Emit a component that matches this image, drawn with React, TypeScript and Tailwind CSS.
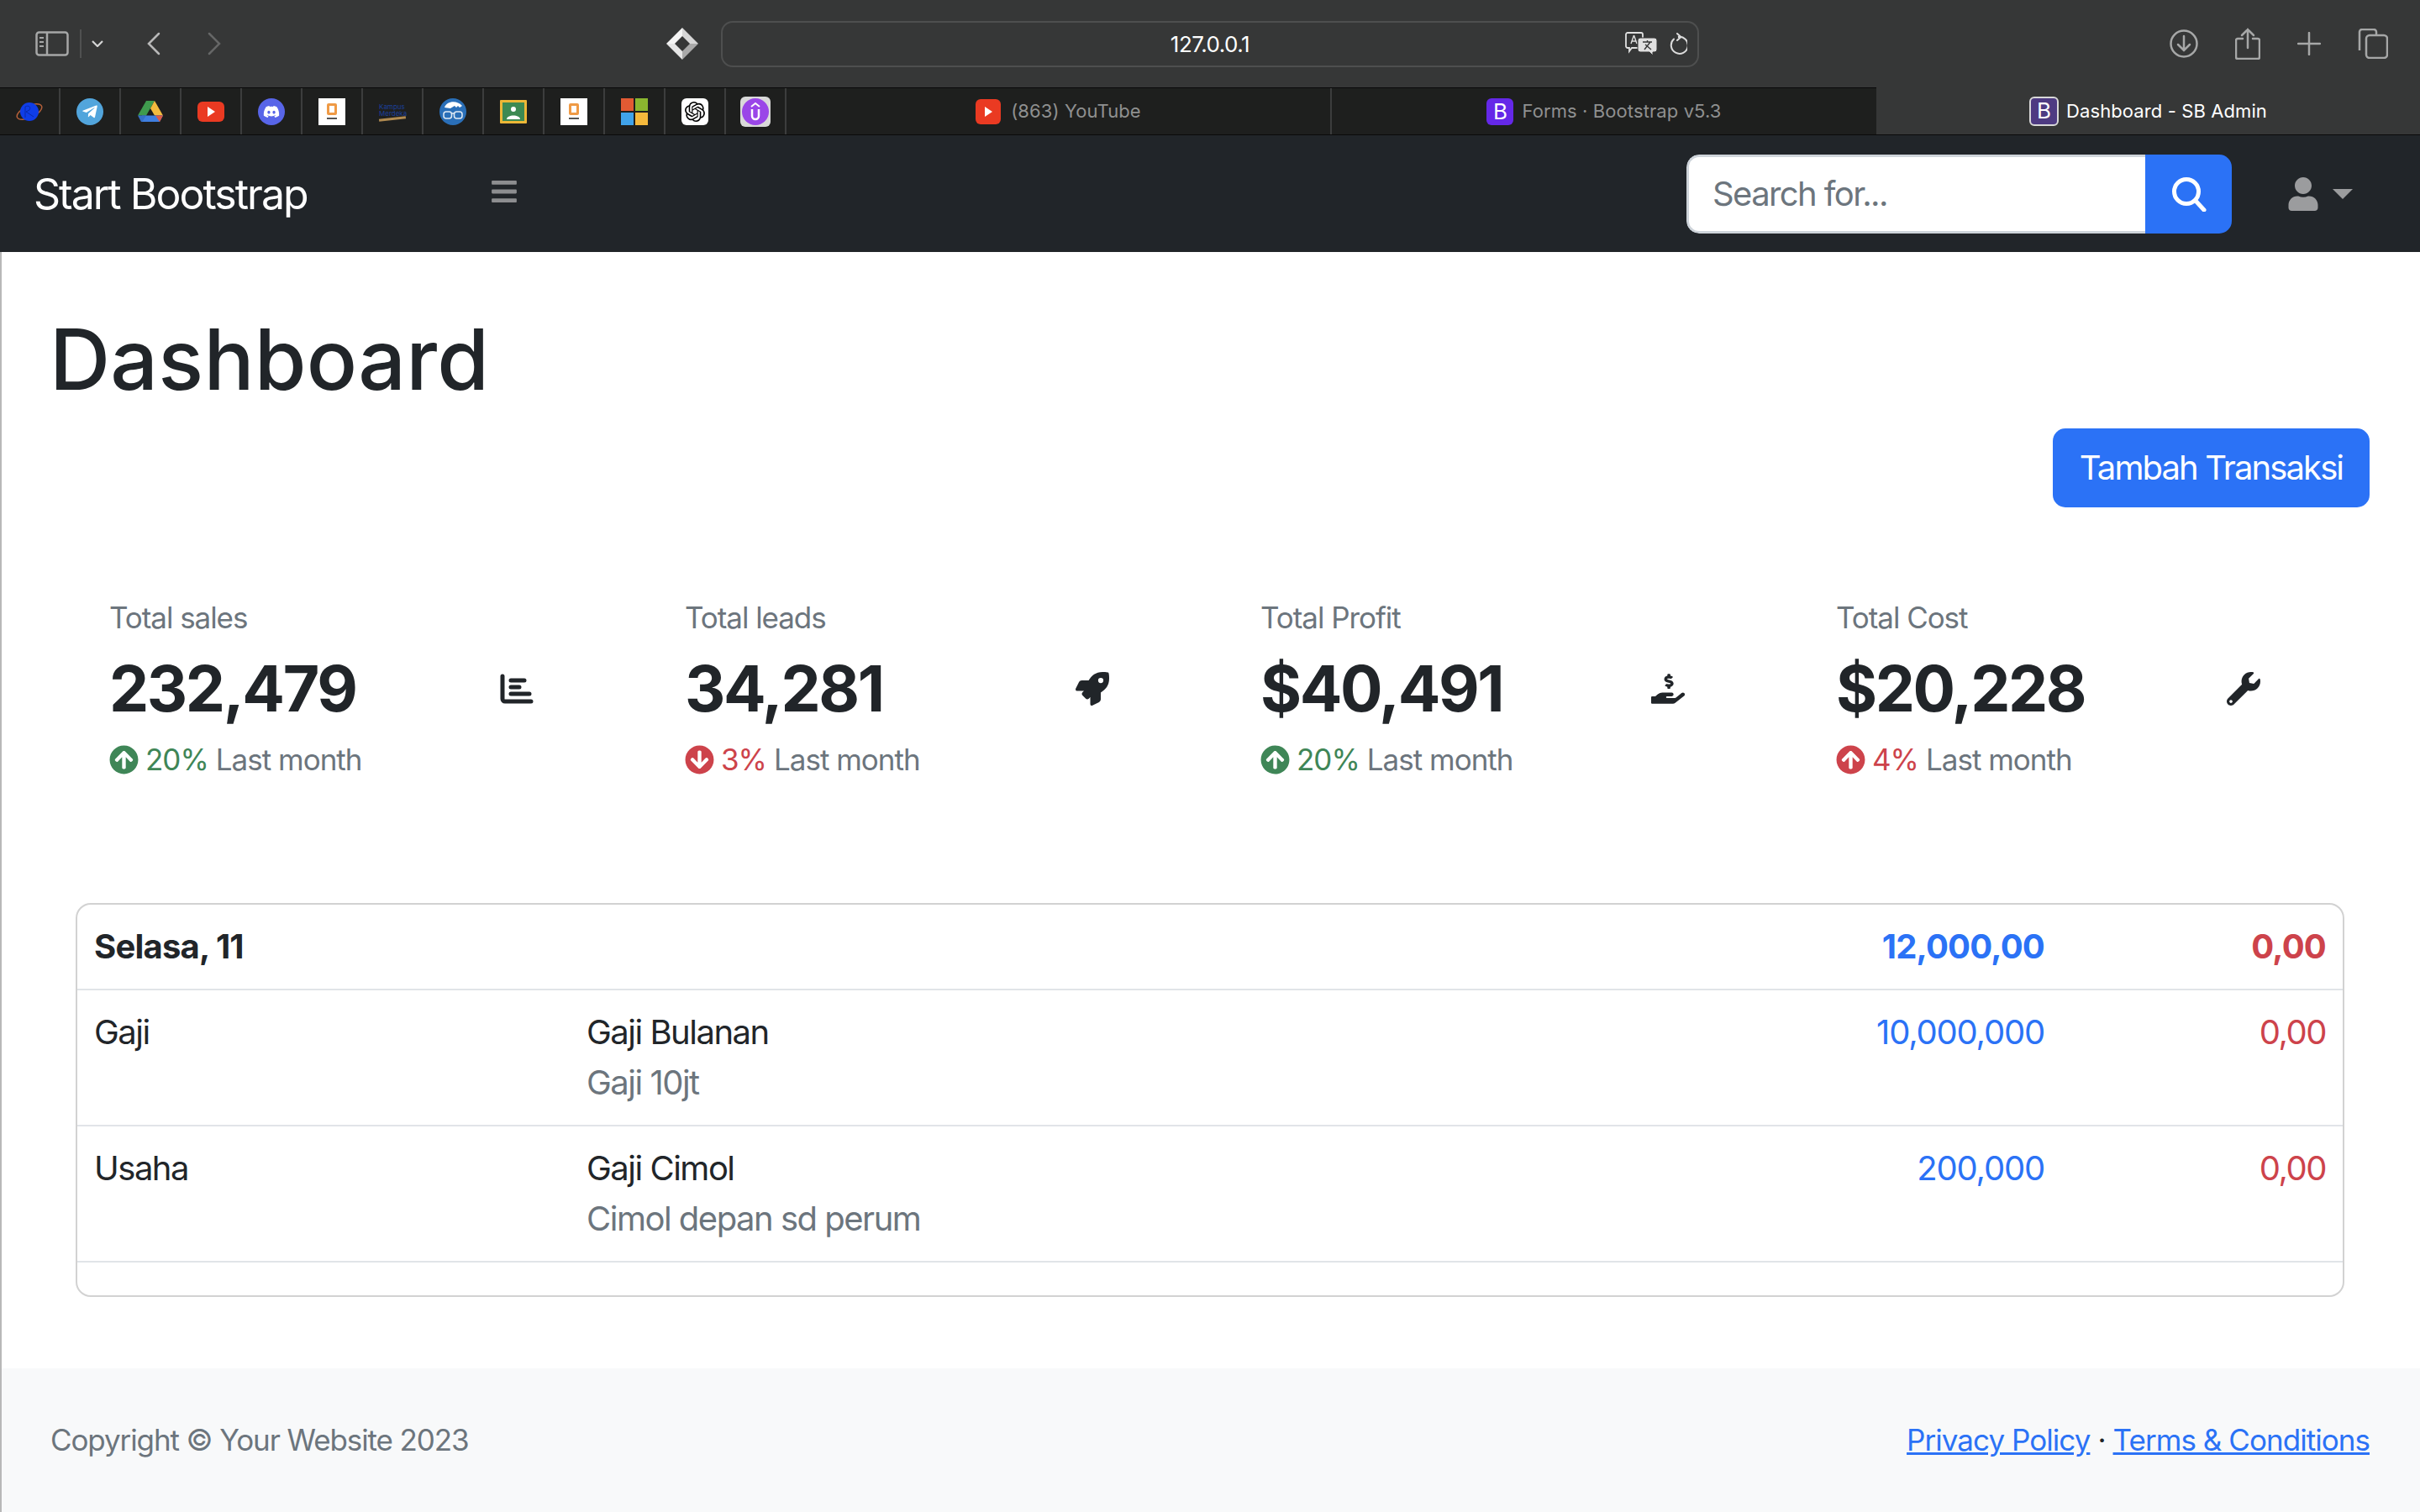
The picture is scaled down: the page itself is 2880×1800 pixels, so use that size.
import { FaArrowCircleDown, FaArrowCircleUp, FaBars, FaDiscord, FaHandHoldingUsd, FaRocket, FaTelegramPlane, FaUser, FaWrench } from "react-icons/fa";
import { SiOpenai } from "react-icons/si";

function ChartIcon({ className }: { className?: string }) {
  return (
    <svg viewBox="0 0 40 36" className={className} style={{ width: 40, height: 36 }} fill="none" stroke="currentColor" strokeWidth="5" strokeLinecap="round">
      <path d="M3 3v27a3 3 0 003 3h31" />
      <path d="M13 8h16M13 16h10M13 24h22" />
    </svg>
  );
}

const stats = [
  { label: "Total sales", value: "232,479", pct: "20%", up: true, tone: "text-[#3f8657]", Icon: ChartIcon },
  { label: "Total leads", value: "34,281", pct: "3%", up: false, tone: "text-[#cd434b]", Icon: FaRocket },
  { label: "Total Profit", value: "$40,491", pct: "20%", up: true, tone: "text-[#3f8657]", Icon: FaHandHoldingUsd },
  { label: "Total Cost", value: "$20,228", pct: "4%", up: true, tone: "text-[#cd434b]", Icon: FaWrench },
];

const rows = [
  { cat: "Gaji", title: "Gaji Bulanan", note: "Gaji 10jt", amount: "10,000,000" },
  { cat: "Usaha", title: "Gaji Cimol", note: "Cimol depan sd perum", amount: "200,000" },
];

function Orbit() {
  return (
    <svg viewBox="0 0 32 32" className="w-8 h-8">
      <ellipse cx="16" cy="16" rx="16" ry="7" fill="none" stroke="#b5603a" strokeWidth="1.5" transform="rotate(-25 16 16)" />
      <circle cx="16" cy="16" r="11" fill="#0f3de8" />
      <path d="M11 23V10c4-2 7 0 5 4l-4 2 9 6" fill="none" stroke="#0a2aa8" strokeWidth="1" />
    </svg>
  );
}

function Drive() {
  return (
    <svg viewBox="0 0 32 32" className="w-8 h-8">
      <path d="M11 3h10l-10 17.500H1z" fill="#3f9b4e" />
      <path d="M21 3l10 17.500H21L16 12z" fill="#f3bb3e" />
      <path d="M6 20.500h25L27 28H5z" fill="#3f7fe0" />
      <path d="M1 20.500h10L6 28H5z" fill="#3570c8" />
      <path d="M31 20.500h-9L27 28z" fill="#dc5a45" />
    </svg>
  );
}

function Youtube({ size = "w-8 h-6" }: { size?: string }) {
  return (
    <div className={`${size} bg-[#ea3a22] rounded-md flex items-center justify-center`}>
      <div className="w-0 h-0 border-y-[6px] border-y-transparent border-l-[9px] border-l-white" />
    </div>
  );
}

function Elibrary() {
  return (
    <div className="w-8 h-8 bg-white flex flex-col items-center justify-center gap-[3px]">
      <div className="w-3 h-[14px] rounded-[2px] border-[3px] border-[#ef9a45]" />
      <div className="w-[12px] h-[2px] bg-[#555555]" />
    </div>
  );
}

function Merdeka() {
  return (
    <div className="w-8 flex flex-col items-start leading-[8px] text-[#1c3f9c] text-[8px] tracking-normal">
      <span>Kampus</span>
      <span>Merdeka</span>
      <div className="w-8 h-[3px] bg-[#b08a50] -rotate-6 mt-[1px]" />
    </div>
  );
}

function Glasses() {
  return (
    <svg viewBox="0 0 32 32" className="w-8 h-8">
      <circle cx="16" cy="16" r="16" fill="#2a6fb8" />
      <path d="M6 11C8 4 20 1 27 9l-3 2-2-2-2 2-2-2-5 3z" fill="#ffffff" />
      <rect x="5" y="16" width="9.500" height="8" rx="3" fill="none" stroke="#dfeaf5" strokeWidth="1.500" />
      <rect x="17.500" y="16" width="9.500" height="8" rx="3" fill="none" stroke="#dfeaf5" strokeWidth="1.500" />
      <path d="M14 18h4" stroke="#dfeaf5" strokeWidth="1.500" />
    </svg>
  );
}

function Classroom() {
  return (
    <svg viewBox="0 0 32 28" className="w-8 h-7">
      <rect width="32" height="28" rx="1" fill="#ecb737" />
      <rect x="3" y="3" width="26" height="22" fill="#3d8a52" />
      <circle cx="16" cy="11" r="3" fill="#ffffff" />
      <path d="M8 23c0-6 16-6 16 0z" fill="#ffffff" />
    </svg>
  );
}

function Microsoft() {
  return (
    <div className="w-8 h-8 grid grid-cols-2 gap-[2px]">
      <div className="bg-[#e25a33]" />
      <div className="bg-[#8ab62f]" />
      <div className="bg-[#40a3ea]" />
      <div className="bg-[#f5b93c]" />
    </div>
  );
}

function Upword() {
  return (
    <div className="w-9 h-9 bg-[#d9d9d9] rounded-md flex items-center justify-center">
      <svg viewBox="0 0 32 32" className="w-8 h-8">
        <circle cx="16" cy="16" r="16" fill="#9a46e8" />
        <path d="M11 10l5-4 5 4" fill="none" stroke="#ffffff" strokeWidth="2" />
        <path d="M12 13v8a4 4 0 008 0v-8" fill="none" stroke="#ffffff" strokeWidth="2.500" />
      </svg>
    </div>
  );
}

const pinned = [
  <Orbit key="orbit" />,
  <div key="tg" className="w-8 h-8 rounded-full bg-[#52a5dc] flex items-center justify-center"><FaTelegramPlane className="text-white text-[20px]" /></div>,
  <Drive key="drive" />,
  <Youtube key="yt" />,
  <div key="dc" className="w-8 h-8 rounded-full bg-[#5865e8] flex items-center justify-center"><FaDiscord className="text-white text-[20px]" /></div>,
  <Elibrary key="el1" />,
  <Merdeka key="km" />,
  <Glasses key="gl" />,
  <Classroom key="cr" />,
  <Elibrary key="el2" />,
  <Microsoft key="ms" />,
  <div key="oa" className="w-8 h-8 rounded-md bg-white flex items-center justify-center"><SiOpenai className="text-black text-[24px]" /></div>,
  <Upword key="up" />,
];

function BootstrapMark({ active }: { active?: boolean }) {
  return (
    <div className={active
      ? "w-[35px] h-[35px] rounded-md bg-[#4e3b82] border-2 border-[#d8d8d8] flex items-center justify-center text-white text-[26px] leading-none tracking-normal"
      : "w-8 h-8 rounded-md bg-[#6528e8] flex items-center justify-center text-white text-[26px] leading-none tracking-normal"}>
      B
    </div>
  );
}

function BrowserBar() {
  return (
    <div className="h-[104px] bg-[#363737] flex items-center">
      <div className="w-[793px] flex items-center pl-[42px]">
        <svg viewBox="0 0 40 30" className="w-[40px] h-[30px]" fill="none" stroke="#a6a7a7" strokeWidth="2.500">
          <rect x="1.500" y="1.500" width="37" height="27" rx="3" />
          <path d="M14 2v26" />
          <path d="M5 8h5M5 13h5M5 18h5" strokeWidth="2" />
        </svg>
        <div className="w-[2px] h-[34px] bg-[#505151] ml-[13px]" />
        <svg viewBox="0 0 14 8" className="w-[14px] h-[8px] ml-[12px]" fill="none" stroke="#d5d5d5" strokeWidth="2.200">
          <path d="M1 1l6 6 6-6" />
        </svg>
        <svg viewBox="0 0 16 28" className="w-[16px] h-[28px] ml-[52px]" fill="none" stroke="#b8b8b8" strokeWidth="2.500" strokeLinecap="round">
          <path d="M14 2L2 14l12 12" />
        </svg>
        <svg viewBox="0 0 16 28" className="w-[16px] h-[28px] ml-[56px]" fill="none" stroke="#666767" strokeWidth="2.500" strokeLinecap="round">
          <path d="M2 2l12 12L2 26" />
        </svg>
      </div>
      <svg viewBox="0 0 38 38" className="w-[38px] h-[38px]">
        <path d="M19 0l19 19-10 0-9-9z" fill="#d6d6d6" />
        <path d="M19 0L0 19h10l9-9z" fill="#f4f4f4" />
        <path d="M0 19l19 19V28l-9-9z" fill="#e6e6e6" />
        <path d="M38 19L19 38V28l9-9z" fill="#a9a9a9" />
      </svg>
      <div className="ml-[27px] w-[1164px] h-[55px] rounded-[14px] border-2 border-[#4e4f4f] flex items-center relative">
        <span className="absolute inset-x-0 text-center text-[26px] text-white tracking-[-0.5px]">127.0.0.1</span>
        <div className="ml-auto mr-[12px] flex items-center gap-[14px]">
          <svg viewBox="0 0 38 28" className="w-[38px] h-[28px]">
            <path d="M3 1h16a2 2 0 012 2v14a2 2 0 01-2 2H8l-3 4v-4H3a2 2 0 01-2-2V3a2 2 0 012-2z" fill="none" stroke="#e0e0e0" strokeWidth="1.800" />
            <path d="M10.500 4l-3.500 10M10.500 4l3.500 10M8 11h5" fill="none" stroke="#e0e0e0" strokeWidth="1.400" />
            <path d="M18 7h17a3 3 0 013 3v11a3 3 0 01-3 3h-2v4l-4-4H18a3 3 0 01-3-3V10a3 3 0 013-3z" fill="#e0e0e0" stroke="#363737" strokeWidth="1" />
            <path d="M21 12h11M26.500 10v2M23 21l7-9M24 15l7 6" stroke="#363737" strokeWidth="1.400" fill="none" />
          </svg>
          <svg viewBox="0 0 22 26" className="w-[22px] h-[26px]" fill="none" stroke="#dcdcdc" strokeWidth="2" strokeLinecap="round">
            <path d="M6 7.500a10 10 0 105-2.500h3" />
            <path d="M10 1l4.500 4-4.500 4" />
          </svg>
        </div>
      </div>
      <div className="flex-1 flex items-center justify-end pr-[38px] gap-[44px]">
        <svg viewBox="0 0 34 34" className="w-[34px] h-[34px]" fill="none" stroke="#a6a7a7" strokeWidth="2.500" strokeLinecap="round">
          <circle cx="17" cy="17" r="15.500" />
          <path d="M17 8v17M10 18l7 7 7-7" />
        </svg>
        <svg viewBox="0 0 30 38" className="w-[30px] h-[38px]" fill="none" stroke="#a6a7a7" strokeWidth="2.500" strokeLinecap="round">
          <path d="M9 13H3a2 2 0 00-2 2v20a2 2 0 002 2h24a2 2 0 002-2V15a2 2 0 00-2-2h-6" />
          <path d="M15 24V2M8 9l7-7 7 7" />
        </svg>
        <svg viewBox="0 0 28 28" className="w-[28px] h-[28px]" fill="none" stroke="#a6a7a7" strokeWidth="2.500" strokeLinecap="round">
          <path d="M14 1v26M1 14h26" />
        </svg>
        <svg viewBox="0 0 36 36" className="w-[36px] h-[36px]" fill="none" stroke="#a6a7a7" strokeWidth="2.500">
          <path d="M5 26V4a3 3 0 013-3h14a3 3 0 013 3v3" transform="translate(-3 0)" />
          <rect x="10" y="8" width="25" height="27" rx="4" />
        </svg>
      </div>
    </div>
  );
}

function TabStrip() {
  return (
    <div className="h-[57px] flex items-stretch tracking-[0.1px]">
      <div className="flex-1 flex items-stretch bg-[#1e1f1e] border-y border-[#0a0a0a]">
        {pinned.map((p, i) => (
          <div key={i} className="w-[72px] border-r-2 border-[#3c3d3d] flex items-center justify-center">{p}</div>
        ))}
        <div className="w-[649px] border-r-2 border-[#3c3d3d] flex items-center justify-center gap-[12px] text-[22px] text-[#8f9090]">
          <Youtube size="w-[30px] h-[30px]" />
          <span>(863) YouTube</span>
        </div>
        <div className="flex-1 flex items-center justify-center gap-[10px] text-[22px] text-[#8f9090]">
          <BootstrapMark />
          <span>Forms · Bootstrap v5.3</span>
        </div>
      </div>
      <div className="w-[647px] bg-[#363737] border-b border-[#0a0a0a] flex items-center justify-center gap-[9px] text-[22px] text-white">
        <BootstrapMark active />
        <span>Dashboard - SB Admin</span>
      </div>
    </div>
  );
}

function Navbar() {
  return (
    <nav className="h-[139px] bg-[#212529] flex items-center pl-[40px] pr-[80px]">
      <span className="w-[543px] text-[50px] text-white leading-none tracking-[-2px]">Start Bootstrap</span>
      <FaBars className="text-[#8d8e90] text-[34px] -mt-[6px]" />
      <div className="ml-auto flex h-[94px] w-[649px] rounded-[15px] overflow-hidden">
        <div className="flex-1 bg-white border-[3px] border-r-0 border-[#ced4da] rounded-l-[15px] flex items-center pl-[28px] text-[40px] text-[#6c757d] tracking-[-1.6px]">
          Search for...
        </div>
        <div className="w-[103px] bg-[#2b72f6] flex items-center justify-center">
          <svg viewBox="0 0 42 42" className="w-[42px] h-[42px]" fill="none" stroke="#ffffff" strokeWidth="5" strokeLinecap="round">
            <circle cx="18" cy="18" r="14.500" />
            <path d="M28.500 28.500L39 40" />
          </svg>
        </div>
      </div>
      <div className="ml-[65px] flex items-center gap-[15px]">
        <FaUser className="text-[#9b9c9e] text-[40px]" />
        <div className="w-0 h-0 border-x-[12px] border-x-transparent border-t-[12px] border-t-[#9b9c9e]" />
      </div>
    </nav>
  );
}

function Row({ a, b, c, d, strong }: { a: React.ReactNode; b?: React.ReactNode; c: string; d: string; strong?: boolean }) {
  return (
    <div className={`grid grid-cols-[586px_1fr_300px_335px] border-b-2 border-[#e1e4e8] leading-[60px] ${strong ? "font-bold tracking-[-0.8px]" : ""}`}>
      <div className="p-5">{a}</div>
      <div className="p-5">{b}</div>
      <div className={`p-5 text-right text-[#2b72f6] ${strong ? "" : "tracking-[-1.2px]"}`}>{c}</div>
      <div className="p-5 text-right text-[#cd434b]">{d}</div>
    </div>
  );
}

export default function App() {
  return (
    <div className="min-h-screen flex flex-col bg-white text-[#212529] font-['Inter',sans-serif] text-[40px] tracking-[-1.5px]">
      <BrowserBar />
      <TabStrip />
      <Navbar />
      <main className="flex-1 flex flex-col border-l-2 border-[#b8b8b8]">
        <div className="pl-[57px] pr-[60px]">
          <h1 className="text-[100px] leading-[120px] mt-[68px] font-medium tracking-[0.2px]">Dashboard</h1>
          <div className="flex justify-end mt-[22px]">
            <button className="h-[94px] w-[377px] rounded-[15px] bg-[#2b72f6] text-white tracking-[-1.9px]">Tambah Transaksi</button>
          </div>
        </div>

        <div className="pl-[128px] mt-[105px] grid grid-cols-[repeat(4,685px)]">
          {stats.map(s => (
            <div key={s.label} className="w-[505px] flex items-center justify-between">
              <div>
                <div className="text-[35px] leading-[52px] text-[#6c757d] tracking-[-1.05px]">{s.label}</div>
                <div className="text-[75px] leading-[90px] mt-[14px] font-bold tracking-[-2.4px]">{s.value}</div>
                <div className="flex items-center text-[35px] leading-[52px] mt-[13px] tracking-[-1px]">
                  {s.up
                    ? <FaArrowCircleUp className={`${s.tone} text-[35px] mr-[8px]`} />
                    : <FaArrowCircleDown className={`${s.tone} text-[35px] mr-[8px]`} />}
                  <span className={s.tone}>{s.pct}</span>
                  <span className="text-[#6c757d] ml-[9px]">Last month</span>
                </div>
              </div>
              <s.Icon className="text-[40px]" />
            </div>
          ))}
        </div>

        <div className="ml-[88px] mt-[145px] w-[2700px] h-[469px] border-2 border-[#d2d2d2] rounded-[18px] overflow-hidden">
          <Row strong a="Selasa, 11" c="12,000,00" d="0,00" />
          {rows.map(r => (
            <Row
              key={r.cat}
              a={r.cat}
              b={<><div>{r.title}</div><div className="text-[#6c757d]">{r.note}</div></>}
              c={r.amount}
              d="0,00"
            />
          ))}
        </div>

        <footer className="mt-auto h-[171px] bg-[#f8f9fa] flex items-center justify-between pl-[58px] pr-[60px] text-[35px] tracking-[-1.1px]">
          <span className="text-[#6c757d]">Copyright © Your Website 2023</span>
          <div className="tracking-[-0.95px]">
            <a className="text-[#2b72f6] underline">Privacy Policy</a>
            <span className="mx-[9px]">·</span>
            <a className="text-[#2b72f6] underline">Terms &amp; Conditions</a>
          </div>
        </footer>
      </main>
    </div>
  );
}
